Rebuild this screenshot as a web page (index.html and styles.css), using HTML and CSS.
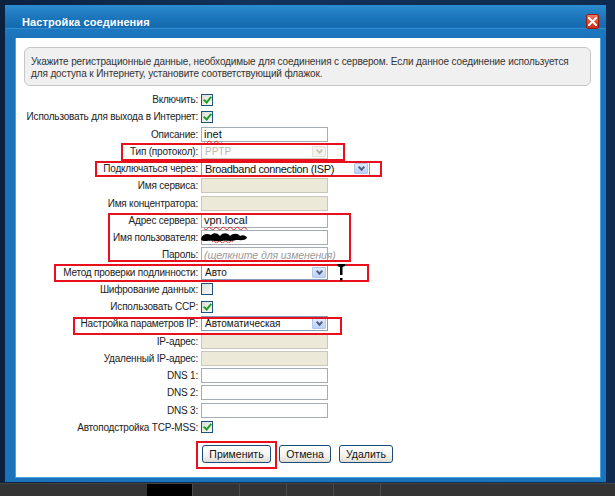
FILE: index.html
```html
<!DOCTYPE html>
<html lang="ru">
<head>
<meta charset="utf-8">
<title>Настройка соединения</title>
<link rel="stylesheet" href="styles.css">
</head>
<body>
<div class="screen">
  <div class="window">
    <div class="titlebar">
      <span class="title">Настройка соединения</span>
      <span class="close" aria-label="Закрыть">
        <svg width="9" height="9" viewBox="0 0 9 9"><path d="M1 1 L8 8 M8 1 L1 8" stroke="#fff" stroke-width="2" stroke-linecap="square"/></svg>
      </span>
    </div>
    <div class="frame">
      <div class="content">
        <div class="note">Укажите регистрационные данные, необходимые для соединения с сервером. Если данное соединение используется для доступа к Интернету, установите соответствующий флажок.</div>

        <div class="form">
          <div class="row"><span class="label">Включить:</span><span class="cb on"></span></div>
          <div class="row"><span class="label">Использовать для выхода в Интернет:</span><span class="cb on"></span></div>
          <div class="row"><span class="label">Описание:</span><span class="field"><span class="typo">inet</span></span></div>
          <div class="row"><span class="label">Тип (протокол):</span><span class="select off"><span class="val">PPTP</span><span class="arrow"></span></span></div>
          <div class="row"><span class="label">Подключаться через:</span><span class="select wide"><span class="val">Broadband connection (ISP)</span><span class="arrow"></span></span></div>
          <div class="row"><span class="label">Имя сервиса:</span><span class="field off"></span></div>
          <div class="row"><span class="label">Имя концентратора:</span><span class="field off"></span></div>
          <div class="row"><span class="label">Адрес сервера:</span><span class="field"><span class="typo">vpn.local</span></span></div>
          <div class="row"><span class="label">Имя пользователя:</span><span class="field"><span class="scribble">
            <svg width="48" height="12" viewBox="0 0 48 12"><path d="M1 8 C2 3 7 2 11 4 C14 1 18 2 20 5 C23 1 28 2 30 5 C33 2 38 2 40 5 C43 3 47 5 47 7 C45 10 40 9 36 9 C31 11 26 9 22 10 C17 11 11 9 7 10 C4 10 1 10 1 8 Z" fill="#000"/><path d="M12 11 q1.5 -2 3 0 t3 0 t3 0 t3 0 t3 0 t3 0 t3 0" fill="none" stroke="#e02020" stroke-width="0.8"/></svg>
          </span></span></div>
          <div class="row"><span class="label">Пароль:</span><span class="field"><span class="hint">(щелкните для изменения)</span></span></div>
          <div class="row"><span class="label">Метод проверки подлинности:</span><span class="select"><span class="val">Авто</span><span class="arrow"></span></span></div>
          <div class="row"><span class="label">Шифрование данных:</span><span class="cb"></span></div>
          <div class="row"><span class="label">Использовать CCP:</span><span class="cb on"></span></div>
          <div class="row"><span class="label">Настройка параметров IP:</span><span class="select"><span class="val">Автоматическая</span><span class="arrow"></span></span></div>
          <div class="row"><span class="label">IP-адрес:</span><span class="field off"></span></div>
          <div class="row"><span class="label">Удаленный IP-адрес:</span><span class="field off"></span></div>
          <div class="row"><span class="label">DNS 1:</span><span class="field"></span></div>
          <div class="row"><span class="label">DNS 2:</span><span class="field"></span></div>
          <div class="row"><span class="label">DNS 3:</span><span class="field"></span></div>
          <div class="row"><span class="label">Автоподстройка TCP-MSS:</span><span class="cb on"></span></div>
        </div>

        <div class="actions">
          <span class="btn apply">Применить</span>
          <span class="btn cancel">Отмена</span>
          <span class="btn remove">Удалить</span>
        </div>

        <!-- red highlight frames drawn on top of the form -->
        <span class="hl hl-type"></span>
        <span class="hl hl-via"></span>
        <span class="hl hl-auth"></span>
        <span class="hl hl-method"></span>
        <span class="hl hl-ip"></span>
        <span class="hl hl-apply"></span>
        <span class="bang"><svg width="10" height="20" viewBox="0 0 10 20"><path d="M1 1 H9 V3 L6.5 4 V12 H4 V4 L1 3 Z" fill="#000"/><rect x="4" y="15" width="2.5" height="2.5" fill="#000"/></svg></span>
      </div>
    </div>
  </div>
  <div class="taskbar">
    <span class="tb-gap"></span>
    <span class="tb-item active"></span>
    <span class="tb-item"></span>
    <span class="tb-item"></span>
    <span class="tb-item"></span>
    <span class="tb-item"></span>
  </div>
</div>
</body>
</html>
```

FILE: styles.css
```css
* { box-sizing: border-box; }

html, body {
  margin: 0;
  padding: 0;
}

body {
  width: 615px;
  height: 496px;
  overflow: hidden;
  background: #0d2748;
  font-family: "Liberation Sans", Arial, sans-serif;
  font-size: 10px;
  color: #222;
}

.screen {
  width: 615px;
  height: 496px;
  display: flex;
  flex-direction: column;
  background: linear-gradient(90deg, #0b2140 0%, #11325a 40%, #0f2c50 100%);
}

/* dialog window */
.window {
  margin: 5px 9px 0 5px;
  width: 601px;
  display: flex;
  flex-direction: column;
}

.titlebar {
  height: 33px;
  display: flex;
  align-items: flex-start;
  justify-content: space-between;
  padding: 0 7px 0 17px;
  background: linear-gradient(180deg, #2c8bd0 0%, #1d77bd 35%, #156aae 68%, #3a95d6 70%, #1c78c0 74%, #1b74bb 100%);
}

.title {
  margin-top: 11px;
  color: #fff;
  font-weight: bold;
  font-size: 11px;
  letter-spacing: 0.1px;
}

.close {
  margin-top: 9px;
  width: 13px;
  height: 15px;
  display: flex;
  align-items: center;
  justify-content: center;
  border: 1px solid #9b1a10;
  border-radius: 2px;
  background: linear-gradient(180deg, #f27a62 0%, #e24a2e 50%, #c8321a 100%);
}

.close svg { display: block; }

.frame {
  background: #1b74bb;
  padding: 0 5px 4px 10px;
}

.content {
  position: relative;
  height: 440px;
  background: #fff;
  border-left: 1px solid #4aa3e0;
  border-right: 1px solid #4aa3e0;
  border-bottom: 1px solid #4aa3e0;
  padding: 9px 9px 0 8px;
}

.note {
  height: 39px;
  padding: 8px 6px 0 6px;
  background: #f0f0f0;
  border: 1px solid #c6c6c6;
  border-radius: 6px;
  line-height: 12px;
  letter-spacing: -0.12px;
  color: #333;
}

/* form rows */
.form {
  margin-top: 5px;
  margin-left: -8px;
}

.row {
  height: 17.25px;
  display: grid;
  grid-template-columns: 182px auto;
  column-gap: 3px;
  align-items: center;
  justify-items: start;
}

.label {
  justify-self: end;
  white-space: nowrap;
  letter-spacing: -0.2px;
  color: #222;
}

.cb {
  width: 12px;
  height: 12px;
  border: 1px solid #1c5180;
  background: linear-gradient(135deg, #dcdcd7 0%, #fbfbf9 100%);
  position: relative;
}

.cb.on::after {
  content: "";
  position: absolute;
  left: 3px;
  top: 0px;
  width: 3px;
  height: 6px;
  border-right: 2px solid #21a121;
  border-bottom: 2px solid #21a121;
  transform: rotate(40deg);
}

.field {
  width: 127px;
  height: 15px;
  border: 1px solid #a5acb5;
  background: #fff;
  display: flex;
  align-items: center;
  padding-left: 2px;
  font-size: 11px;
  color: #111;
  position: relative;
}

.field.off {
  background: #ece9d8;
  border-color: #c9c7ba;
}

.typo {
  text-decoration: underline wavy #e02020;
  text-decoration-thickness: 1px;
  text-underline-offset: 2px;
}

.hint {
  font-style: italic;
  color: #9a9a9a;
  font-size: 10.5px;
  letter-spacing: -0.1px;
  white-space: nowrap;
}

.scribble {
  position: absolute;
  left: -2px;
  top: 0px;
}

.scribble svg { display: block; }

.select {
  width: 127px;
  height: 15px;
  border: 1px solid #7f9db9;
  background: #fff;
  display: flex;
  align-items: center;
  justify-content: space-between;
  padding: 0 1px 0 3px;
  color: #111;
  font-size: 10px;
  white-space: nowrap;
}

.select.wide { width: 169px; font-size: 11px; letter-spacing: -0.35px; }

.select.off {
  border-color: #c9c7ba;
  color: #b8b8b0;
  background: #fff;
}

.arrow {
  flex: none;
  width: 14px;
  height: 11px;
  border: 1px solid #b1c7f0;
  border-radius: 1px;
  background: linear-gradient(180deg, #e0eafd 0%, #bcd0f8 100%);
  position: relative;
}

.arrow::after {
  content: "";
  position: absolute;
  left: 4px;
  top: 1px;
  width: 3px;
  height: 3px;
  border-right: 2px solid #4d6185;
  border-bottom: 2px solid #4d6185;
  transform: rotate(45deg);
}

.select.off .arrow {
  border-color: #e4e2d8;
  background: #f4f3ee;
}

.select.off .arrow::after {
  border-color: #c9c7ba;
}

/* buttons */
.actions {
  margin-top: 9px;
  padding-left: 178px;
  display: flex;
  gap: 8px;
}

.btn {
  height: 18px;
  display: flex;
  align-items: center;
  justify-content: center;
  border: 1px solid #1c4b7c;
  border-radius: 3px;
  background: linear-gradient(180deg, #ffffff 0%, #f4f3ee 60%, #dedcd2 100%);
  color: #111;
  font-size: 10.5px;
}

.apply { width: 69px; }
.cancel { width: 52px; }
.remove { width: 54px; }

/* red highlight frames */
.hl {
  position: absolute;
  border: 2px solid #e8101c;
  pointer-events: none;
}

.hl-type   { left: 105px; top: 105px; width: 224px; height: 18px; }
.hl-via    { left: 79px;  top: 123px; width: 287px; height: 16px; }
.hl-auth   { left: 92px;  top: 175px; width: 243px; height: 49px; }
.hl-method { left: 38px;  top: 226px; width: 315px; height: 18px; }
.hl-ip     { left: 57px;  top: 279px; width: 269px; height: 18px; }
.hl-apply  { left: 180px; top: 403px; width: 81px;  height: 28px; }

.bang {
  position: absolute;
  left: 320px;
  top: 225px;
}

.bang svg { display: block; }

/* desktop taskbar strip */
.taskbar {
  margin-top: 1px;
  flex: 1;
  display: flex;
  background: #333;
  border-top: 1px solid #444;
}

.tb-gap { width: 147px; }

.tb-item {
  width: 47px;
  border-right: 1px solid #4a4a4a;
}

.tb-item.active {
  background: #000;
  width: 46px;
}
```
